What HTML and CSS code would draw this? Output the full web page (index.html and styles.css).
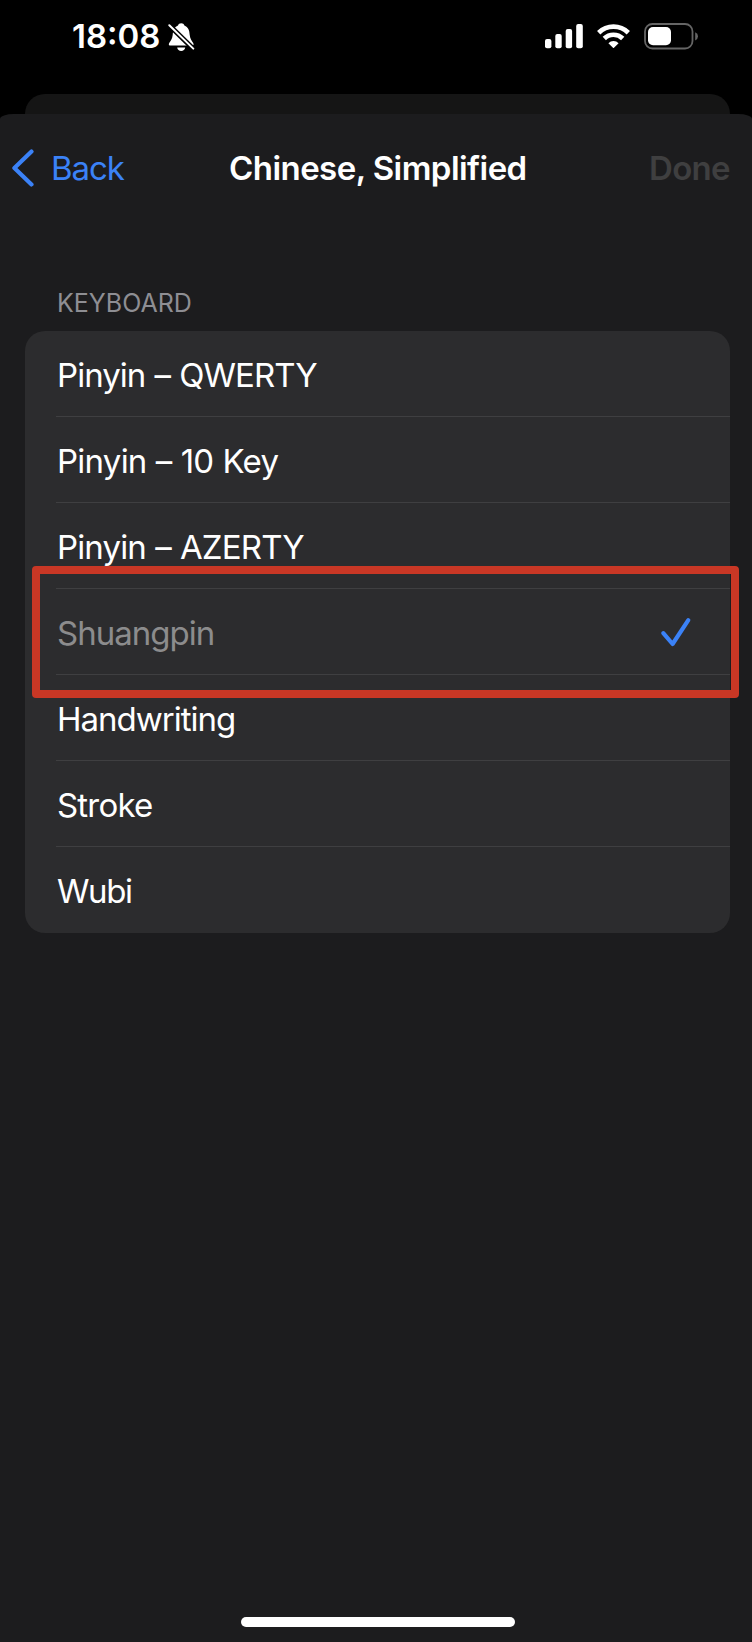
FILE: index.html
```
<!DOCTYPE html>
<html lang="en">
<head>
<meta charset="utf-8">
<title>Chinese, Simplified</title>
<link rel="stylesheet" href="styles.css">
</head>
<body>
<div class="screen">
  <header class="status">
    <div class="status-left">
      <span class="time">18:08</span>
      <svg class="bell" width="28" height="30" viewBox="0 0 28 30">
        <path fill="#fff" d="M1.200 20C2.500 17.800 4.200 16 4.700 12C5 7 6.200 4.300 10 2.600C10.500 1 11.500 0.300 13.200 0.300C14.900 0.300 15.900 1 16.400 2.600C20.200 4.300 21.400 7 21.700 12C22.200 16 23.900 17.800 25.200 20C26.200 21.800 25.200 22.600 24 22.600H2.400C1.200 22.600 0.200 21.800 1.200 20ZM9.200 24.500H17.200C17 26.700 15.200 28 13.200 28C11.200 28 9.400 26.700 9.200 24.500Z"/>
        <path stroke="#000" stroke-width="5" d="M-1 .1L27 27.500"/>
        <path stroke="#fff" stroke-width="2" stroke-linecap="round" d="M1.300 2.200L25.300 25.600"/>
      </svg>
    </div>
    <div class="status-right">
      <svg class="signal" width="39" height="25" viewBox="0 0 39 25" fill="#fff">
        <rect x="0" y="15" width="6.400" height="9.200" rx="2"/>
        <rect x="10.300" y="10" width="6.400" height="14.200" rx="2"/>
        <rect x="20.700" y="5" width="6.400" height="19.200" rx="2"/>
        <rect x="31.200" y="0" width="6.600" height="24.200" rx="2"/>
      </svg>
      <svg class="wifi" width="33" height="25" viewBox="0 0 33 25">
        <g fill="none" stroke="#fff" stroke-width="4.700">
          <path d="M1.700 8.700A21.200 21.200 0 0 1 31.300 8.700"/>
          <path d="M7.300 14.500A13.100 13.100 0 0 1 25.700 14.500"/>
        </g>
        <path fill="#fff" d="M11.400 19.200A7.200 7.200 0 0 1 21.600 19.200L17 23.800Q16.500 24.300 16 23.800Z"/>
      </svg>
      <svg class="battery" width="55" height="27" viewBox="0 0 55 27">
        <rect x="1" y="1" width="47.500" height="24.500" rx="7.500" fill="none" stroke="#656565" stroke-width="1.800"/>
        <rect x="4" y="4" width="23" height="18.300" rx="5" fill="#fff"/>
        <path d="M51.200 9.200Q54 10.400 54 13.200T51.200 17.400Z" fill="#656565"/>
      </svg>
    </div>
  </header>
  <div class="sheet-behind"></div>
  <main class="sheet">
    <nav class="nav">
      <a class="back">
        <svg width="24" height="38" viewBox="0 0 24 38"><path fill="none" stroke="#3b82f7" stroke-width="4.200" stroke-linecap="round" stroke-linejoin="round" d="M20.500 2.600L3.400 19L20.500 35.400"/></svg>
        <span>Back</span>
      </a>
      <h1 class="title">Chinese, Simplified</h1>
      <span class="done">Done</span>
    </nav>
    <h2 class="section">KEYBOARD</h2>
    <ul class="list">
      <li class="row"><span class="qwerty">Pinyin – QWERTY</span></li>
      <li class="row"><span class="tenkey">Pinyin – 10 Key</span></li>
      <li class="row"><span class="azerty">Pinyin – AZERTY</span></li>
      <li class="row selected"><span class="shuangpin">Shuangpin</span>
        <svg width="32" height="32" viewBox="0 0 32 32"><path fill="none" stroke="#3b82f7" stroke-width="4.200" stroke-linecap="round" stroke-linejoin="round" d="M3.300 17.200L12.600 28L28.300 4.200"/></svg>
        <div class="highlight"></div>
      </li>
      <li class="row"><span class="handwriting">Handwriting</span></li>
      <li class="row"><span class="stroke">Stroke</span></li>
      <li class="row"><span class="wubi">Wubi</span></li>
    </ul>
    <div class="home"></div>
  </main>
</div>
</body>
</html>
```
FILE: styles.css
```
* { box-sizing: border-box; }
body {
  margin: 0;
  background: #000;
  font-family: Inter, "Liberation Sans", sans-serif;
  color: #fff;
}
.screen {
  width: 752px;
  height: 1642px;
  display: flex;
  flex-direction: column;
  overflow: hidden;
}
svg { display: block; flex: none; }
.status {
  height: 94px;
  display: flex;
  justify-content: space-between;
  align-items: flex-start;
  padding: 23px 53px 0 72px;
}
.status-left, .status-right { display: flex; }
.time {
  width: 96px;
  font-size: 33px;
  line-height: 27px;
  font-weight: 600;
}
.status-right { padding-top: 1px; }
.wifi { margin-left: 13px; }
.battery { margin: -1px 0 0 14px; }
.sheet-behind {
  height: 20px;
  margin: 0 22px 0 25px;
  background: #151515;
  border-radius: 20px 20px 0 0;
}
.sheet {
  flex: 1;
  display: flex;
  flex-direction: column;
  background: #1c1c1e;
  border-radius: 14px 14px 0 0 / 5px 5px 0 0;
}
.nav {
  height: 110px;
  display: grid;
  grid-template-columns: 229px 1fr 103px;
  align-items: center;
  padding: 0 0 2px;
  font-size: 33px;
}
.back {
  display: flex;
  align-items: center;
  gap: 16px;
  padding-left: 11px;
  color: #3b82f7;
  letter-spacing: -1.1px;
}
.title {
  margin: 0;
  font-size: 33px;
  font-weight: 600;
  letter-spacing: -.55px;
  white-space: nowrap;
}
.done { color: #3f3f40; font-weight: 600; letter-spacing: -.7px; }
.section {
  margin: 64px 0 0 57px;
  height: 43px;
  line-height: 30px;
  font-size: 25px;
  font-weight: 400;
  color: #8e8e93;
}
.list {
  list-style: none;
  margin: 0 22px 0 25px;
  padding: 0;
  background: #2c2c2e;
  border-radius: 20px;
}
.row {
  position: relative;
  height: 86px;
  margin-left: 31px;
  display: flex;
  align-items: center;
  justify-content: space-between;
  border-bottom: 1px solid #3f3f41;
  font-size: 33px;
  letter-spacing: -1px;
}
.row span { padding: 2px 0 0 1px; }
.row .qwerty { letter-spacing: -.95px; word-spacing: .8px; }
.row .tenkey { letter-spacing: -.75px; word-spacing: .6px; }
.row .azerty { letter-spacing: -.85px; word-spacing: .7px; }
.row .stroke { letter-spacing: -.8px; }
.row .wubi { letter-spacing: -1.4px; }
.row:last-child { border-bottom-color: transparent; }
.selected { color: #8c8c8d; padding-right: 38px; }
.highlight {
  position: absolute;
  left: -24px;
  top: -23px;
  width: 707px;
  height: 132px;
  border: 8px solid #c93725;
  border-radius: 4px;
  z-index: 1;
}
.home {
  width: 274px;
  height: 10px;
  border-radius: 5px;
  background: #fff;
  margin: auto 0 15px 241px;
}
```
